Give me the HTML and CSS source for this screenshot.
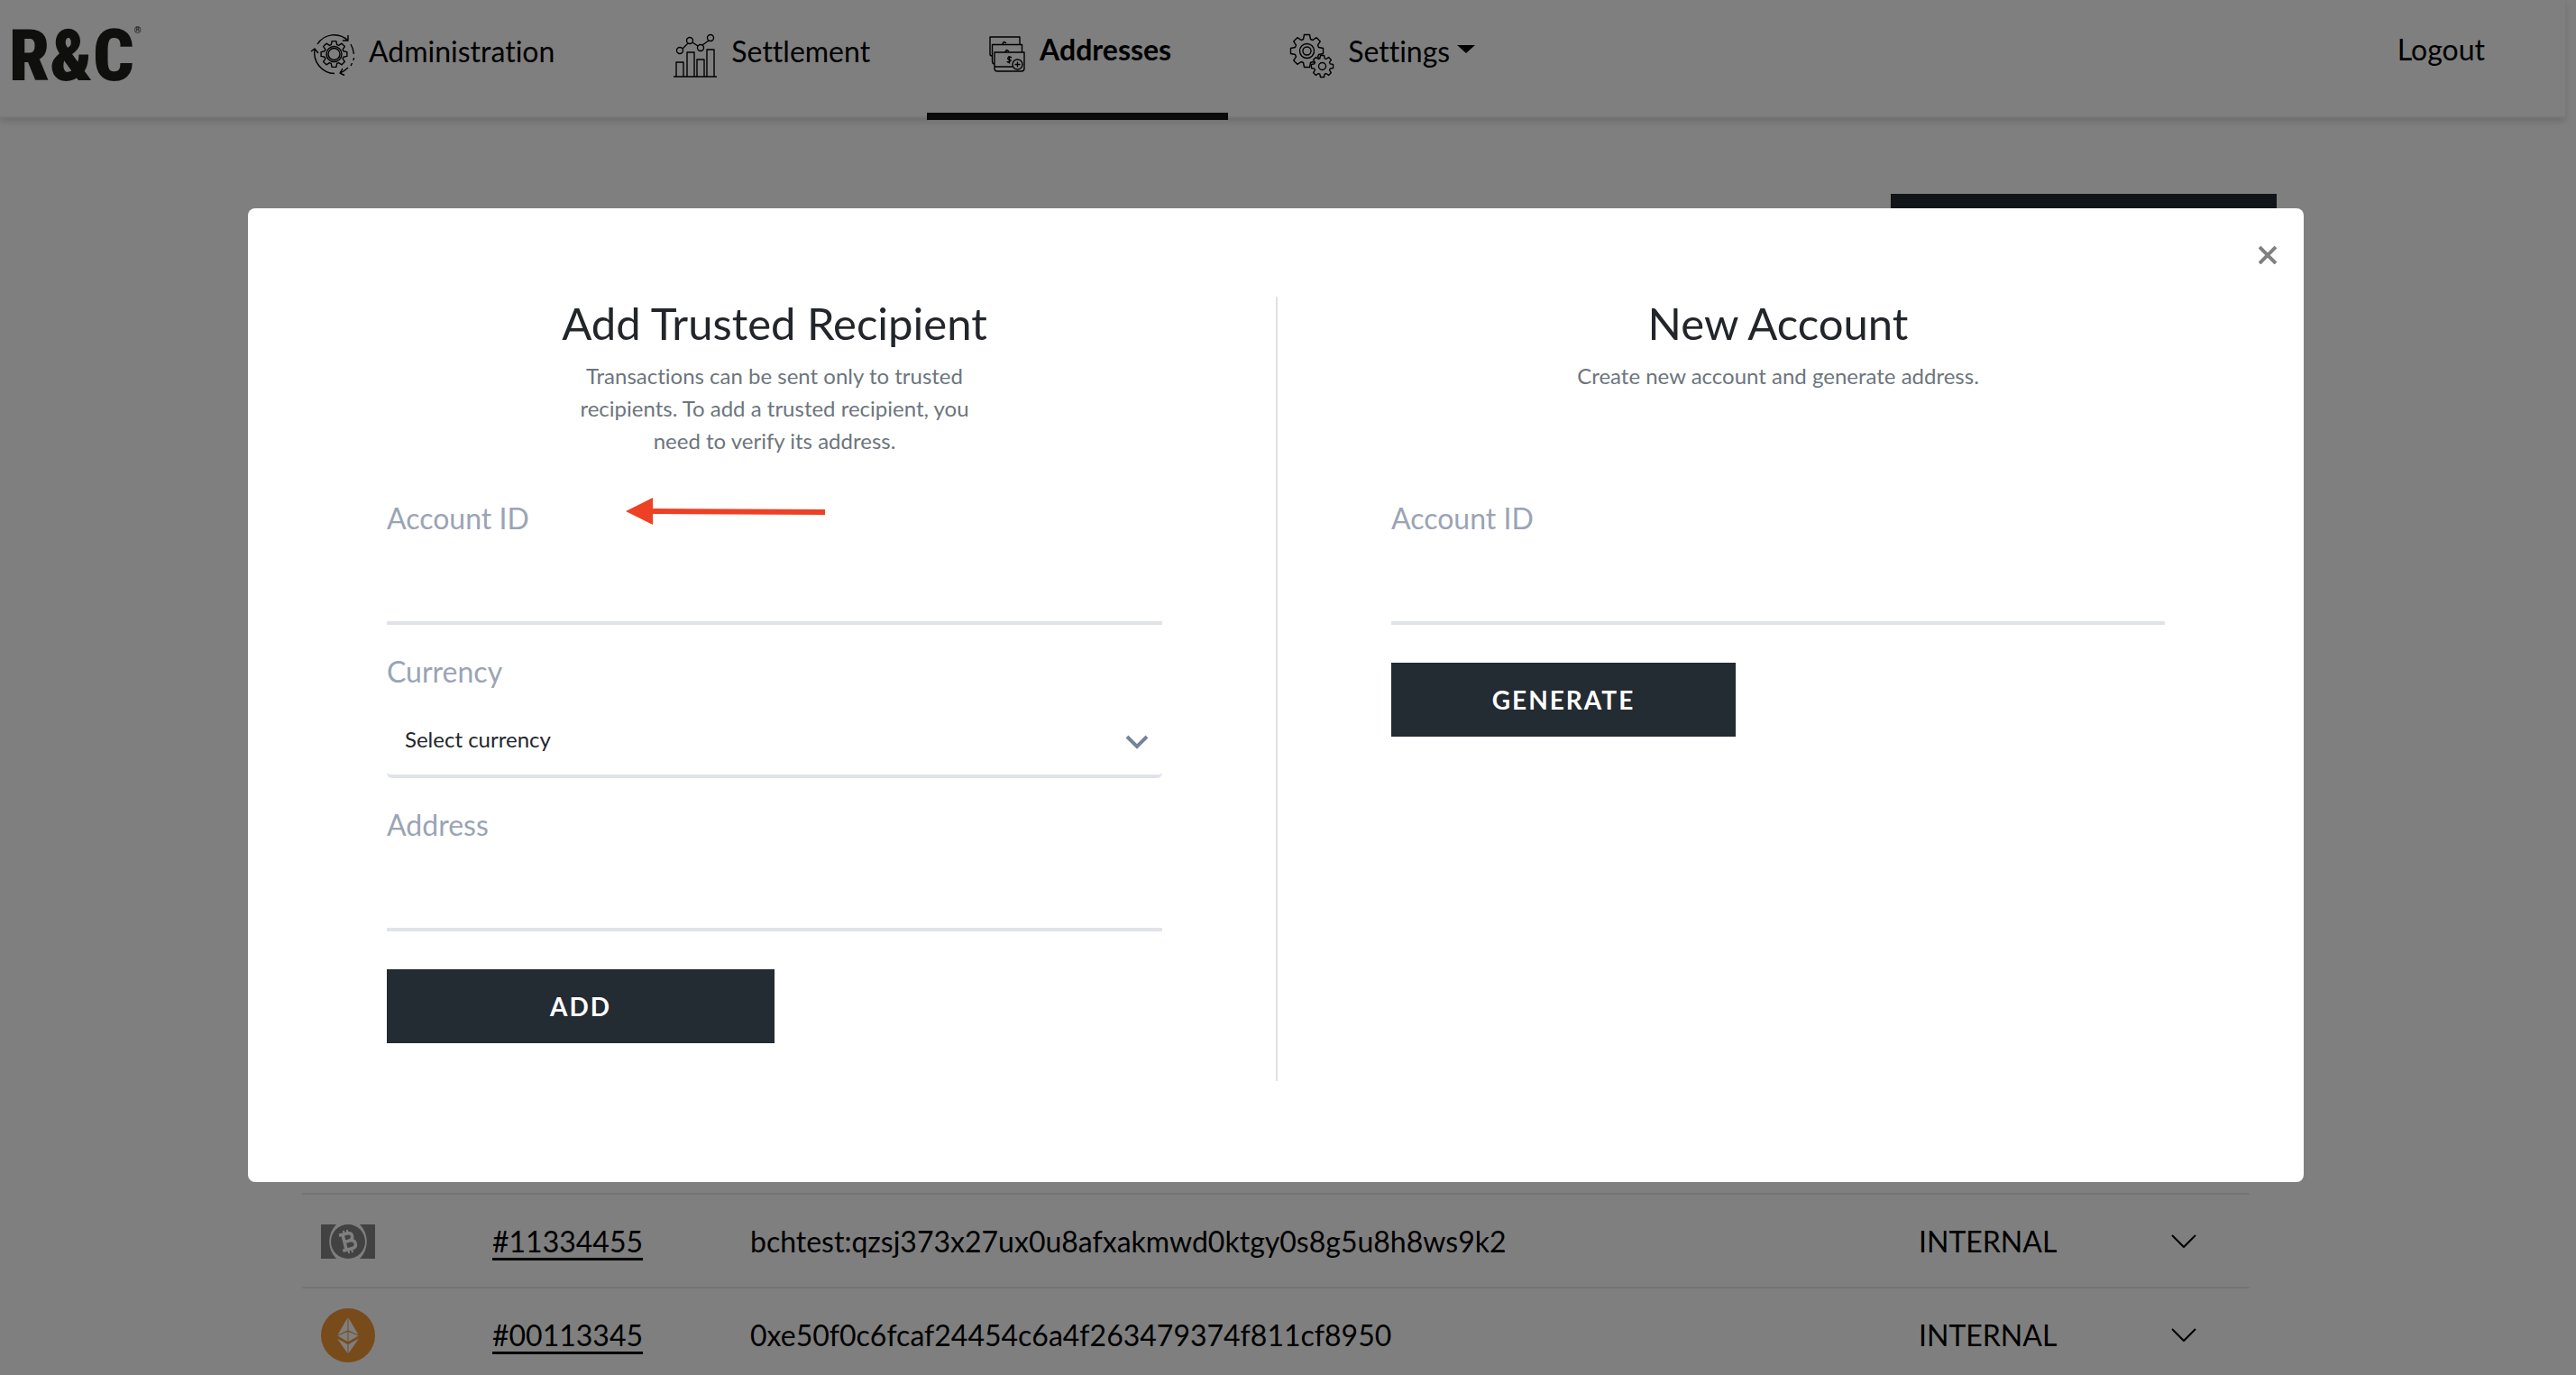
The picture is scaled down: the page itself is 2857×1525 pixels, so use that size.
FILE: index.html
```html
<!DOCTYPE html>
<html lang="en">
<head>
<meta charset="utf-8">
<meta name="viewport" content="width=device-width, initial-scale=1">
<title>Addresses</title>
<link rel="stylesheet" href="styles.css">
</head>
<body>
<svg width="0" height="0" class="sprite" aria-hidden="true">
  <defs>
    <path id="gear" vector-effect="non-scaling-stroke" d="M13-4L18-3L18 3L13 4L12 6.4L14.8 10.6L10.6 14.8L6.4 12L4 13L3 18L-3 18L-4 13L-6.4 12L-10.6 14.8L-14.8 10.6L-12 6.4L-13 4L-18 3L-18-3L-13-4L-12-6.4L-14.8-10.6L-10.6-14.8L-6.4-12L-4-13L-3-18L3-18L4-13L6.4-12L10.6-14.8L14.8-10.6L12-6.4Z"/>
  </defs>
</svg>

<header class="topbar">
  <a class="logo" href="#">R&amp;C<span class="logo-mark">®</span></a>
  <nav class="nav">
    <a class="nav-link" href="#">
      <svg class="nav-icon" stroke-width="1.4" width="48" height="48" viewBox="0 0 48 48" aria-hidden="true">
        <use href="#gear" transform="translate(25.5 22) scale(.8)"/>
        <circle cx="25.500" cy="22" r="8.500"/>
        <circle cx="25.500" cy="22" r="6.500"/>
        <path d="M7 11A22 22 0 0 1 41 7M41 1V7H35M0 19L4 16L8 21M4 17A23 23 0 0 0 26 43.500M44 11Q47 16 47.500 22M47.500 26L47 29M45.500 32L44 35M41 37Q37 41 32 43M35 38L32 43L37 45.500"/>
      </svg>
      <span>Administration</span>
    </a>
    <a class="nav-link" href="#">
      <svg class="nav-icon" stroke-width="1.4" width="48" height="48" viewBox="0 0 48 48" aria-hidden="true">
        <path d="M0 47H48M3 47V31H11V47M15 47V20H23V47M26 47V28H34V47M37 47V17H45V47M10 16L16 10M21 9L27 13M32 12L39 7"/>
        <circle cx="7" cy="18" r="3.500"/><circle cx="18" cy="7" r="3.500"/><circle cx="30" cy="15" r="3.500"/><circle cx="41" cy="4" r="3.500"/>
      </svg>
      <span>Settlement</span>
    </a>
    <a class="nav-link active" href="#" aria-current="page">
      <svg class="nav-icon" stroke-width="1.4" width="40" height="40" viewBox="0 0 40 40" aria-hidden="true">
        <path d="M34 9V1H1V20Q1 22 3 22M36.500 18V9.500H3.500V28Q3.500 31 6 31M6 18H39V36Q39 39 36 39H9Q6 39 6 36ZM6 34H26M31.500 28.500V34.500M28.500 31.500H34.500"/>
        <circle cx="31.500" cy="31.500" r="5.500"/>
        <path d="M25 24Q22 22 21 24T23 26.500T21 29Q20 28.500 20 28M22.500 22V30.500M15 9Q15 7 17 6.500L19 8M18 18Q18 16 20 15.500L22 17"/>
      </svg>
      <span>Addresses</span>
    </a>
    <a class="nav-link" href="#">
      <svg class="nav-icon" stroke-width="1.4" width="48" height="48" viewBox="0 0 48 48" aria-hidden="true">
        <use href="#gear" transform="translate(18.500 18.500)"/>
        <circle cx="18.500" cy="18.500" r="8"/><circle cx="18.500" cy="18.500" r="4.500"/>
        <use class="gear-front" href="#gear" transform="translate(35.500 35.500) scale(.67)"/>
        <circle cx="35.500" cy="35.500" r="4"/>
      </svg>
      <span class="caret">Settings</span>
    </a>
  </nav>
  <a class="logout" href="#">Logout</a>
</header>

<main class="page">
  <button class="btn page-action" type="button" aria-label="Add address"></button>
  <table class="addresses">
    <colgroup><col class="c-coin"><col class="c-id"><col class="c-address"><col class="c-type"><col class="c-more"></colgroup>
    <tbody>
      <tr>
        <td class="coin">
          <svg width="60" height="38" viewBox="0 0 60 38" role="img" aria-label="BCH">
            <path fill="#848484" d="M0 0H17A27 27 0 0 0 17 38H0ZM60 0H43A27 27 0 0 1 43 38H60Z"/>
            <circle cx="30" cy="19" r="19" fill="#848484"/>
            <g transform="rotate(-14 30 19)" fill="none" stroke="#fff" stroke-width="3.500">
              <path d="M22 10H31Q36 10 36 14T31 18.500H26M22 27.500H32Q37.500 27.500 37.500 23T32 18.500M26 10V27.500"/>
              <path stroke-width="2" d="M28 6V10M32 6V10M28 28V32M32 28V32"/>
            </g>
          </svg>
        </td>
        <td><a class="account" href="#">#11334455</a></td>
        <td>bchtest:qzsj373x27ux0u8afxakmwd0ktgy0s8g5u8h8ws9k2</td>
        <td>INTERNAL</td>
        <td><button class="expand" type="button" aria-label="Expand"><svg width="28" height="16" viewBox="0 0 28 16"><path d="M1 1L14 14L27 1"/></svg></button></td>
      </tr>
      <tr>
        <td class="coin">
          <svg width="60" height="60" viewBox="0 0 60 60" role="img" aria-label="ETH">
            <circle cx="30" cy="30" r="30" fill="#f09636"/>
            <path fill="#fff" d="M29.500 10.500V24.500L18.500 29.500ZM30.500 10.500V24.500L41.500 29.500ZM29.500 26V37L18.500 30.500ZM30.500 26V37L41.500 30.500ZM18 33.500L29.500 40V50ZM42 33.500L30.500 40V50Z"/>
          </svg>
        </td>
        <td><a class="account" href="#">#00113345</a></td>
        <td>0xe50f0c6fcaf24454c6a4f263479374f811cf8950</td>
        <td>INTERNAL</td>
        <td><button class="expand" type="button" aria-label="Expand"><svg width="28" height="16" viewBox="0 0 28 16"><path d="M1 1L14 14L27 1"/></svg></button></td>
      </tr>
    </tbody>
  </table>
</main>

<div class="backdrop">
  <div class="modal" role="dialog" aria-modal="true" aria-labelledby="recipient-title">
    <button class="close" type="button" aria-label="Close"><svg width="20" height="20" viewBox="0 0 20 20"><path d="M1 1L19 19M19 1L1 19"/></svg></button>

    <section class="column">
      <h2 class="title" id="recipient-title">Add Trusted Recipient</h2>
      <p class="intro">Transactions can be sent only to trusted recipients. To add a trusted recipient, you need to verify its address.</p>
      <form class="form">
        <div class="field">
          <label for="account">Account ID</label>
          <input id="account" type="text">
        </div>
        <div class="field">
          <label for="currency">Currency</label>
          <div class="select">
            <select id="currency"><option>Select currency</option></select>
            <svg width="28" height="20" viewBox="0 0 28 20" aria-hidden="true"><path d="M3 3L14 14L25 3"/></svg>
          </div>
        </div>
        <div class="field">
          <label for="address">Address</label>
          <input id="address" type="text">
        </div>
        <button class="btn btn-add" type="button">ADD</button>
      </form>
    </section>

    <section class="column">
      <h2 class="title">New Account</h2>
      <p class="intro">Create new account and generate address.</p>
      <form class="form">
        <div class="field">
          <label for="new-account">Account ID</label>
          <input id="new-account" type="text">
        </div>
        <button class="btn btn-generate" type="button">GENERATE</button>
      </form>
    </section>

    <svg class="pointer" width="222" height="32" viewBox="0 0 222 32" aria-hidden="true">
      <path fill="#ee4025" d="M0 16L30 1V13L221 14V20L30 19V31Z"/>
    </svg>
  </div>
</div>
</body>
</html>
```
FILE: styles.css
```css
* { box-sizing: border-box; }

body {
  margin: 0;
  height: 100vh;
  overflow: hidden;
  background: #fff;
  color: #000;
  font-family: Lato, "Open Sans", sans-serif;
  font-size: 32px;
  line-height: 48px;
  font-variant-ligatures: none;
}

a { color: inherit; text-decoration: none; }
button, input, select { font: inherit; font-variant-ligatures: none; }
.sprite { position: absolute; }

/* Top bar */
.topbar {
  display: flex;
  margin-right: 12px;
  padding-right: 89px;
  border-bottom: 2px solid #eeeefa;
  box-shadow: 0 4px 8px rgba(0, 0, 0, .15);
}
.logo {
  display: flex;
  align-items: flex-start;
  width: 276px;
  padding: 24px 0 0 10px;
  color: #1f1f1a;
  font: 900 80px/76px "Roboto Condensed", Roboto, sans-serif;
}
.logo-mark { font-size: 10px; line-height: 20px; }
.nav { display: flex; }
.nav-link {
  position: relative;
  display: flex;
  align-items: center;
  gap: 16px;
  height: 129px;
  padding: 0 63px 16px 69px;
}
.nav-icon {
  margin-top: 10px;
  overflow: visible;
  fill: none;
  stroke: #000;
  stroke-linejoin: round;
}
.gear-front { fill: #fff; }
.active { padding-bottom: 20px; font-weight: 700; }
.active::after {
  content: "";
  position: absolute;
  inset: auto 0 -4px;
  height: 8px;
  background: #141414;
}
.caret::after {
  content: "";
  display: inline-block;
  margin-left: 8px;
  vertical-align: 10px;
  border: solid transparent;
  border-width: 9px 10px 0;
  border-top-color: #000;
}
.logout { margin-left: auto; padding-top: 31px; }

/* Page behind the dialog */
.page {
  display: flex;
  flex-direction: column;
  align-items: center;
  padding: 84px 27px 0 0;
}
.page-action { align-self: flex-end; width: 428px; margin-right: 305px; }
.addresses {
  width: 90%;
  max-width: 2160px;
  margin-top: 1026px;
  border-spacing: 0;
  table-layout: fixed;
}
.addresses td {
  height: 104px;
  padding: 2px 0 0 1px;
  border-top: 2px solid #e8e8e8;
}
.addresses .coin { padding-left: 21px; }
.addresses svg { display: block; }
.c-coin { width: 210px; }
.c-id { width: 286px; }
.c-type { width: 280px; }
.c-more { width: 88px; }
.account {
  text-decoration: underline;
  text-decoration-thickness: 3px;
  text-decoration-skip-ink: none;
  text-underline-offset: 6px;
}
.expand { display: block; padding: 0; border: 0; background: none; }
.expand path { fill: none; stroke: #000; stroke-width: 2px; }

/* Dialog */
.backdrop {
  position: fixed;
  inset: 0;
  padding: 231px 27px 0 0;
  background: rgba(0, 0, 0, .5);
}
.modal {
  position: relative;
  display: grid;
  grid-template-columns: 1fr 1fr;
  width: 90%;
  max-width: 2280px;
  margin: 0 auto;
  padding: 98px 28px 112px;
  border-radius: 8px;
  background: #fff;
}
.close {
  position: absolute;
  top: 42px;
  right: 30px;
  display: flex;
  padding: 0;
  border: 0;
  background: none;
}
.close path { fill: none; stroke: #808080; stroke-width: 4px; }
.column { padding: 0 126px 42px; }
.column + .column { border-left: 2px solid #e0e2e8; }
.title {
  margin: 0 0 12px;
  color: #22262b;
  font-size: 49px;
  font-weight: 400;
  line-height: 58px;
  text-align: center;
}
.intro {
  max-width: 460px;
  min-height: 108px;
  margin: 0 auto 44px;
  color: #6d757d;
  font-size: 24px;
  line-height: 36px;
  text-align: center;
}
.form { display: flex; flex-direction: column; align-items: flex-start; gap: 28px; }
.field { width: 100%; }
.field label { display: block; color: #9aa4b5; }
.field input, .select select {
  display: block;
  width: 100%;
  height: 94px;
  padding: 0;
  border: 0;
  border-bottom: 4px solid #e0e3e8;
  outline: 0;
  background: #fff;
}
.select { display: grid; align-items: center; }
.select select, .select svg { grid-area: 1 / 1; }
.select select {
  appearance: none;
  padding: 12px 60px 0 20px;
  border-radius: 6px;
  color: #22262b;
  font-size: 24px;
}
.select svg {
  justify-self: end;
  margin: 16px 14px 0 0;
  pointer-events: none;
}
.select path { fill: none; stroke: #75839b; stroke-width: 4px; }
.btn {
  height: 82px;
  padding: 0;
  border: 0;
  background: #232b33;
  color: #fff;
  font-size: 28px;
  font-weight: 700;
  letter-spacing: 2px;
}
.form .btn { margin-top: 14px; }
.btn-add { width: 50%; }
.btn-generate { width: 382px; }
.pointer { position: absolute; top: 320px; left: 419px; }
```
